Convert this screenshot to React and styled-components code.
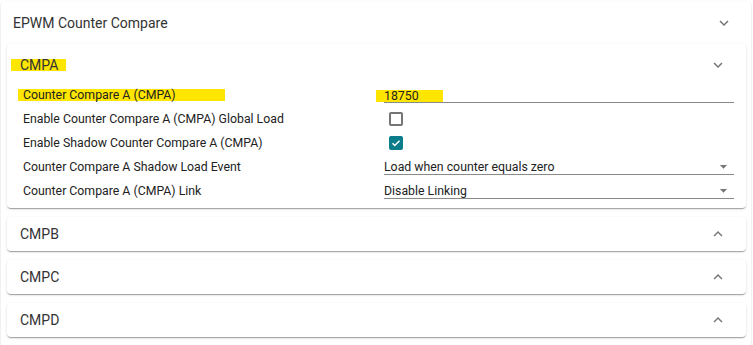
import styled, { createGlobalStyle } from 'styled-components';

const GlobalStyle = createGlobalStyle`
  body {
    margin: 0;
    padding: 2px 1px;
    background: #fff;
    font-family: Roboto, "Liberation Sans", sans-serif;
  }
`;

const shadow =
  '0px 2px 1px -1px rgba(0,0,0,0.2), 0px 1px 1px 0px rgba(0,0,0,0.14), 0px 1px 3px 0px rgba(0,0,0,0.12)';

const OuterCard = styled.div`
  width: 750px;
  background: #fff;
  border-radius: 4px;
  box-shadow: ${shadow};
  padding-bottom: 10px;
`;

const OuterHeader = styled.div`
  height: 42px;
  display: flex;
  align-items: center;
  justify-content: space-between;
  padding: 0 18px 0 12px;
  font-size: 14px;
  color: #333;
`;

const Section = styled.div`
  margin: 0 5px 9px 6px;
  background: #fff;
  border-radius: 4px;
  box-shadow: ${shadow};
`;

const SectionHeader = styled.div`
  box-sizing: border-box;
  height: ${(p) => (p.open ? '39px' : '34px')};
  display: flex;
  align-items: center;
  justify-content: space-between;
  padding: ${(p) => (p.open ? '2px 19px 0 4px' : '0 19px 0 13px')};
  font-size: 14px;
  color: #333;
`;

const Highlight = styled.span`
  background: #ffe600;
  display: inline-block;
  line-height: 12px;
  height: 12px;
  width: ${(p) => p.w}px;
  padding-left: ${(p) => p.pl}px;
  box-sizing: border-box;
`;

const Rows = styled.div`
  padding: 0 12px 5px 16px;
`;

const Row = styled.div`
  display: grid;
  grid-template-columns: 361px 1fr;
  height: 24px;
`;

const Label = styled.div`
  font-size: 12.3px;
  line-height: 24px;
  color: #222;
  margin-left: ${(p) => (p.hl ? '-5px' : '0')};
`;

const Field = styled.div`
  margin-top: 4px;
  height: 15px;
  border-bottom: 1px solid #8a8a8a;
  display: flex;
  align-items: center;
  justify-content: space-between;
  font-size: 12.3px;
  color: #222;
`;

const ValueMark = styled.span`
  background: #ffe600;
  margin-left: -8px;
  padding-left: 8px;
  width: 67px;
  height: 12px;
  line-height: 12px;
  box-sizing: border-box;
  margin-top: 2px;
`;

const Box = styled.div`
  margin: 5px 0 0 5px;
  width: 14px;
  height: 14px;
  box-sizing: border-box;
  border-radius: 2px;
  border: ${(p) => (p.checked ? 'none' : '2px solid #757575')};
  background: ${(p) => (p.checked ? '#0a7c8a' : '#fff')};
  display: flex;
  align-items: center;
  justify-content: center;
`;

const DropWrap = styled.span`
  display: flex;
  margin-right: 2px;
`;

const Icon = ({ d, size = 18 }) => (
  <svg width={size} height={size} viewBox="0 0 24 24" fill="#757575">
    <path d={d} />
  </svg>
);

const MORE = 'M16.59 8.59 12 13.17 7.41 8.59 6 10l6 6 6-6z';
const LESS = 'm12 8-6 6 1.41 1.41L12 10.83l4.59 4.58L18 14z';
const DROP = 'M7 10l5 5 5-5z';

function Select({ value }) {
  return (
    <Field>
      <span>{value}</span>
      <DropWrap>
        <Icon d={DROP} size={17} />
      </DropWrap>
    </Field>
  );
}

function Check({ checked }) {
  return (
    <Box checked={checked}>
      {checked && (
        <svg width="12" height="12" viewBox="0 0 24 24">
          <path d="M5 12.5l4.5 4.5L19 7.5" stroke="#fff" strokeWidth="3" fill="none" />
        </svg>
      )}
    </Box>
  );
}

function Collapsed({ title }) {
  return (
    <Section>
      <SectionHeader>
        <span>{title}</span>
        <Icon d={LESS} />
      </SectionHeader>
    </Section>
  );
}

export default function App() {
  return (
    <>
      <GlobalStyle />
      <OuterCard>
        <OuterHeader>
          <span>EPWM Counter Compare</span>
          <Icon d={MORE} />
        </OuterHeader>
        <Section>
          <SectionHeader open>
            <Highlight w={55} pl={9}>CMPA</Highlight>
            <Icon d={MORE} />
          </SectionHeader>
          <Rows>
            <Row>
              <Label hl>
                <Highlight w={207} pl={5}>Counter Compare A (CMPA)</Highlight>
              </Label>
              <Field>
                <ValueMark>18750</ValueMark>
              </Field>
            </Row>
            <Row>
              <Label>Enable Counter Compare A (CMPA) Global Load</Label>
              <Check />
            </Row>
            <Row>
              <Label>Enable Shadow Counter Compare A (CMPA)</Label>
              <Check checked />
            </Row>
            <Row>
              <Label>Counter Compare A Shadow Load Event</Label>
              <Select value="Load when counter equals zero" />
            </Row>
            <Row>
              <Label>Counter Compare A (CMPA) Link</Label>
              <Select value="Disable Linking" />
            </Row>
          </Rows>
        </Section>
        <Collapsed title="CMPB" />
        <Collapsed title="CMPC" />
        <Collapsed title="CMPD" />
      </OuterCard>
    </>
  );
}
